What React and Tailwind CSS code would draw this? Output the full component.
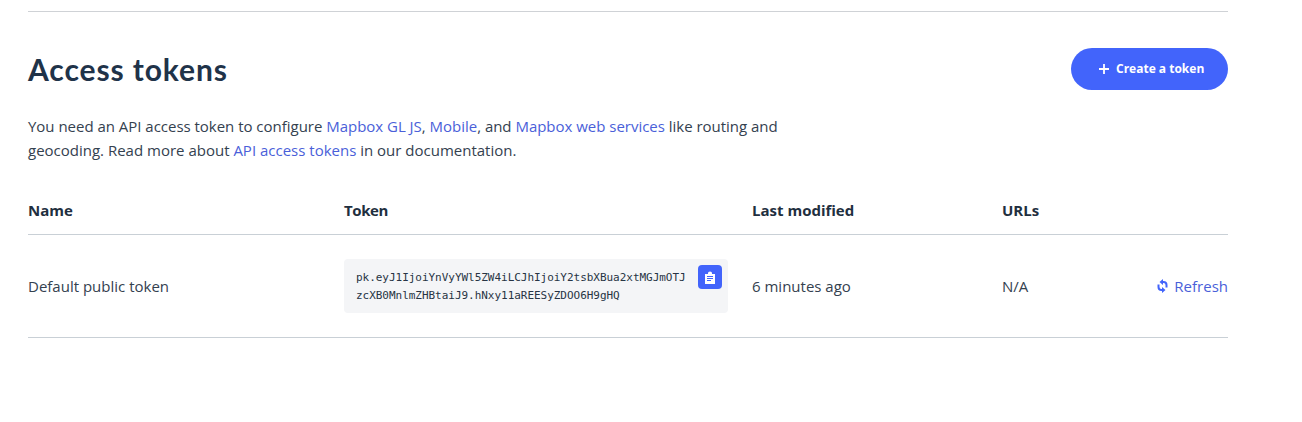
const columns = "grid grid-cols-[316px_408px_250px_120px_106px] items-center";

function Link({ children }) {
  return <a href="#" className="text-[#4a5fd9]">{children}</a>;
}

function PlusIcon() {
  return (
    <svg className="h-[10px] w-[10px]" viewBox="0 0 10 10" fill="none" stroke="white" strokeWidth="1.8">
      <path d="M5 0v10M0 5h10" />
    </svg>
  );
}

function ClipboardIcon() {
  return (
    <svg className="mt-px h-[14px] w-[12px]" viewBox="0 0 12 14">
      <path fill="white" d="M1 3h3V2Q4 0.500 6 0.500T8 2v1h3v10H1z" />
      <path fill="none" stroke="#4264fb" strokeWidth="1" d="M3 5.500h6M3 7.500h6M3 9.500h4" />
    </svg>
  );
}

function RefreshIcon() {
  return (
    <svg className="h-[14px] w-[11px]" viewBox="0 0 11 14">
      <path fill="none" stroke="#4264fb" strokeWidth="2" d="M5 3h1.500Q9.500 3 9.500 6v2.500M6 11H4.500Q1.500 11 1.500 8V5.500" />
      <path fill="#4264fb" d="M6 0v6L2.500 3zM5 8v6l3.500-3z" />
    </svg>
  );
}

export default function App() {
  return (
    <main className="h-[422px] w-[1302px] bg-white pl-7 pt-[11px] font-['Open_Sans',sans-serif] text-[15px] leading-6 text-[#273d56]">
      <section className="w-[1200px] border-t border-[#cfd2d6] pt-9">
        <header className="flex h-[42px] items-center justify-between">
          <h1 className="font-['Lato',sans-serif] text-[30px] font-bold leading-9 tracking-[0.9px] text-[#1f3349]">Access tokens</h1>
          <button className="flex h-[42px] w-[157px] items-center gap-[7px] rounded-full bg-[#4264fb] pl-7 text-[12px] font-bold text-white">
            <PlusIcon />
            <span className="whitespace-nowrap">Create a token</span>
          </button>
        </header>
        <p className="mt-6 w-[800px] text-[#34414f]">
          <span className="tracking-[-0.02px]">
            You need an API access token to configure <Link>Mapbox GL JS</Link>, <Link>Mobile</Link>, and <Link>Mapbox web services</Link> like routing and
          </span>
          <br />
          geocoding. Read more about <Link>API access tokens</Link> in our documentation.
        </p>
        <div className={`${columns} mt-9 h-[37px] border-b border-[#c9d0d6] pb-3 font-bold text-[#1f2f40]`}>
          <span>Name</span>
          <span className="tracking-[-0.4px]">Token</span>
          <span>Last modified</span>
          <span>URLs</span>
        </div>
        <div className={`${columns} h-[103px] border-b border-[#c9d0d6] text-[#34414f]`}>
          <span>Default public token</span>
          <div className="flex h-[54px] w-[384px] items-start justify-between rounded bg-[#f4f5f7] pl-3 pr-[6px] pt-[6px]">
            <code className="pt-1 font-['DejaVu_Sans_Mono',monospace] text-[11px] leading-[18px] tracking-[-0.03px] text-[#273444]">
              pk.eyJ1IjoiYnVyYWl5ZW4iLCJhIjoiY2tsbXBua2xtMGJmOTJ
              <br />
              zcXB0MnlmZHBtaiJ9.hNxy11aREESyZDOO6H9gHQ
            </code>
            <button className="flex h-6 w-6 items-center justify-center rounded bg-[#4264fb]">
              <ClipboardIcon />
            </button>
          </div>
          <span>6 minutes ago</span>
          <span>N/A</span>
          <a href="#" className="flex items-center justify-end gap-[6px] text-[#4a5fd9]">
            <RefreshIcon />
            Refresh
          </a>
        </div>
      </section>
    </main>
  );
}
